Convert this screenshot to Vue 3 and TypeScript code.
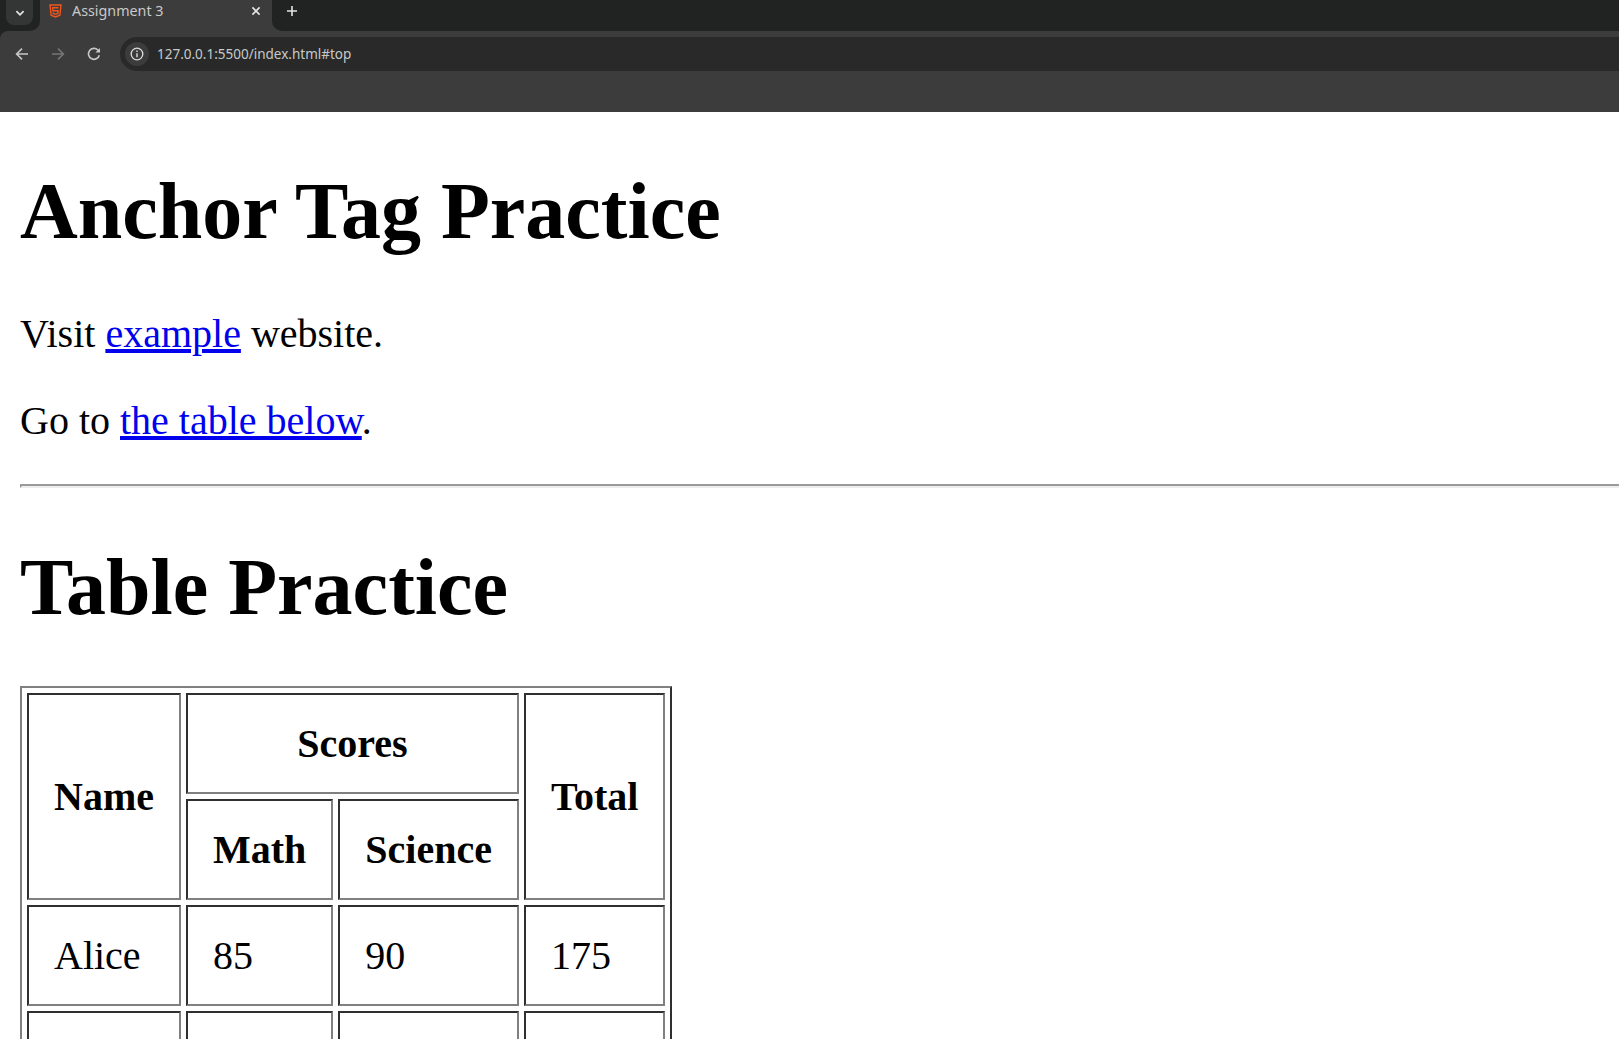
<script setup lang="ts">
interface Row {
  name: string
  math: number
  science: number
  total: number
}

const rows: Row[] = [
  { name: 'Alice', math: 85, science: 90, total: 175 },
  { name: 'Bob', math: 78, science: 88, total: 166 },
]
</script>

<template>
  <div class="window">
    <header class="browser">
      <div class="strip">
        <div class="strip-left">
          <button class="tab-search" aria-label="Search tabs">
            <svg width="12" height="12" viewBox="0 0 12 12">
              <path d="M2.4 4.2 6 7.8l3.6-3.6" fill="none" stroke="#e3e3e3" stroke-width="1.8" />
            </svg>
          </button>
        </div>
        <div class="tab">
          <svg class="favicon" width="13" height="14" viewBox="0 0 13 14">
            <path d="M1 1h11l-1.1 10.2L6.5 13l-4.400-1.800z" fill="none" stroke="#f0561d" stroke-width="1.4" />
            <path d="M9.500 3.800H3.600l.3 3h5.200l-.3 2.700-2.300.8-2.200-.8-.1-1.100" fill="none" stroke="#f0561d" stroke-width="1.400" />
          </svg>
          <span class="tab-title">Assignment 3</span>
          <svg class="tab-close" width="12" height="12" viewBox="0 0 12 12">
            <path d="M2.400 2.400l7.200 7.200M9.600 2.400 2.400 9.600" stroke="#e3e3e3" stroke-width="1.600" />
          </svg>
        </div>
        <div class="strip-right">
          <svg width="12" height="12" viewBox="0 0 12 12">
            <path d="M6 1v10M1 6h10" stroke="#e3e3e3" stroke-width="1.600" />
          </svg>
        </div>
      </div>
      <div class="toolbar">
        <div class="nav-row">
          <span class="nav-btn">
            <svg width="14" height="14" viewBox="0 0 14 14">
              <path d="M13 7H2.400M7 1.600 1.600 7 7 12.400" fill="none" stroke="#c7c7c7" stroke-width="1.600" />
            </svg>
          </span>
          <span class="nav-btn">
            <svg width="14" height="14" viewBox="0 0 14 14">
              <path d="M1 7h10.600M7 1.600 12.400 7 7 12.400" fill="none" stroke="#757575" stroke-width="1.600" />
            </svg>
          </span>
          <span class="nav-btn">
            <svg width="14" height="14" viewBox="0 0 14 14">
              <path d="M12.300 8.200A5.500 5.500 0 1 1 10.900 3L12.400 4.600" fill="none" stroke="#c7c7c7" stroke-width="1.600" />
              <path d="M13 1v4.600H8.400z" fill="#c7c7c7" />
            </svg>
          </span>
          <div class="omnibox">
            <span class="site-info">
              <svg width="14" height="14" viewBox="0 0 14 14">
                <circle cx="7" cy="7" r="5.800" fill="none" stroke="#dcdcdc" stroke-width="1.300" />
                <path d="M7 6.200v4M7 3.600v1.500" stroke="#dcdcdc" stroke-width="1.400" />
              </svg>
            </span>
            <span class="url">127.0.0.1:5500/index.html#top</span>
          </div>
        </div>
      </div>
    </header>

    <main class="page">
      <h1>Anchor Tag Practice</h1>
      <p>Visit <a href="#example">example</a> website.</p>
      <p>Go to <a href="#table">the table below</a>.</p>
      <hr />
      <h1>Table Practice</h1>
      <table>
        <thead>
          <tr>
            <th rowspan="2">Name</th>
            <th colspan="2">Scores</th>
            <th rowspan="2">Total</th>
          </tr>
          <tr>
            <th>Math</th>
            <th>Science</th>
          </tr>
        </thead>
        <tbody>
          <tr v-for="row in rows" :key="row.name">
            <td>{{ row.name }}</td>
            <td>{{ row.math }}</td>
            <td>{{ row.science }}</td>
            <td>{{ row.total }}</td>
          </tr>
        </tbody>
      </table>
    </main>
  </div>
</template>

<style scoped>
.window {
  height: 1039px;
  overflow: hidden;
  background: #fff;
}

.browser {
  background: #202322;
  font-family: "Noto Sans", sans-serif;
}

.strip {
  display: flex;
  height: 31px;
  background: #3c3c3c;
}

.strip-left {
  flex: none;
  width: 40px;
  background: #202322;
  border-bottom-right-radius: 10px;
  padding-left: 6px;
  box-sizing: border-box;
}

.tab-search {
  display: flex;
  align-items: center;
  justify-content: center;
  width: 27px;
  height: 25px;
  padding: 0;
  border: 0;
  border-radius: 0 0 8px 8px;
  background: #343635;
}

.tab {
  flex: none;
  width: 232px;
  height: 22px;
  box-sizing: border-box;
  display: flex;
  align-items: center;
  padding: 0 10px 0 9px;
  color: #c9c9c9;
}

.favicon {
  flex: none;
}

.tab-title {
  flex: 1;
  margin: 0 0 2px 10px;
  font-size: 14.3px;
  white-space: nowrap;
}

.tab-close {
  flex: none;
}

.strip-right {
  flex: 1;
  height: 31px;
  box-sizing: border-box;
  padding: 5px 0 0 14px;
  background: #202322;
  border-bottom-left-radius: 10px;
}

.strip-right svg {
  display: block;
}

.toolbar {
  height: 81px;
  box-sizing: border-box;
  padding-top: 6px;
  background: #3c3c3c;
  border-top-left-radius: 8px;
}

.nav-row {
  display: flex;
  align-items: center;
  padding-left: 4px;
}

.nav-btn {
  flex: none;
  display: flex;
  align-items: center;
  justify-content: center;
  width: 36px;
  height: 34px;
}

.omnibox {
  flex: 1;
  display: flex;
  align-items: center;
  height: 34px;
  margin-left: 8px;
  padding-left: 5px;
  background: #292929;
  border-radius: 17px 0 0 17px;
}

.site-info {
  flex: none;
  display: flex;
  align-items: center;
  justify-content: center;
  width: 24px;
  height: 24px;
  border-radius: 50%;
  background: #3c3c3c;
}

.url {
  margin-left: 8px;
  font-size: 13.5px;
  color: #c7c9c9;
  white-space: nowrap;
}

.page {
  padding: 0 0 0 20px;
  font-family: "Liberation Serif", "Times New Roman", serif;
  font-size: 40px;
  color: #000;
  display: flow-root;
}

h1 {
  margin: 53.6px 0;
  font-size: 80px;
  font-weight: 700;
}

p {
  margin: 40px 0;
}

a {
  color: #0000ee;
  text-decoration: underline;
}

hr {
  margin: 20px -6px 20px 0;
  height: 0;
  border-style: solid;
  border-width: 2px;
  border-color: #9a9a9a #eeeeee #eeeeee #9a9a9a;
  background: transparent;
}

table {
  border-collapse: separate;
  border-spacing: 5px;
  border-style: solid;
  border-width: 2px;
  border-color: #808080 #2f2f2f #2f2f2f #808080;
}

th,
td {
  padding: 25px;
  border-style: solid;
  border-width: 2px;
  border-color: #2f2f2f #808080 #808080 #2f2f2f;
}

th {
  font-weight: 700;
  text-align: center;
}

td {
  text-align: left;
}
</style>

<style>
html,
body {
  margin: 0;
  overflow: hidden;
}
</style>
